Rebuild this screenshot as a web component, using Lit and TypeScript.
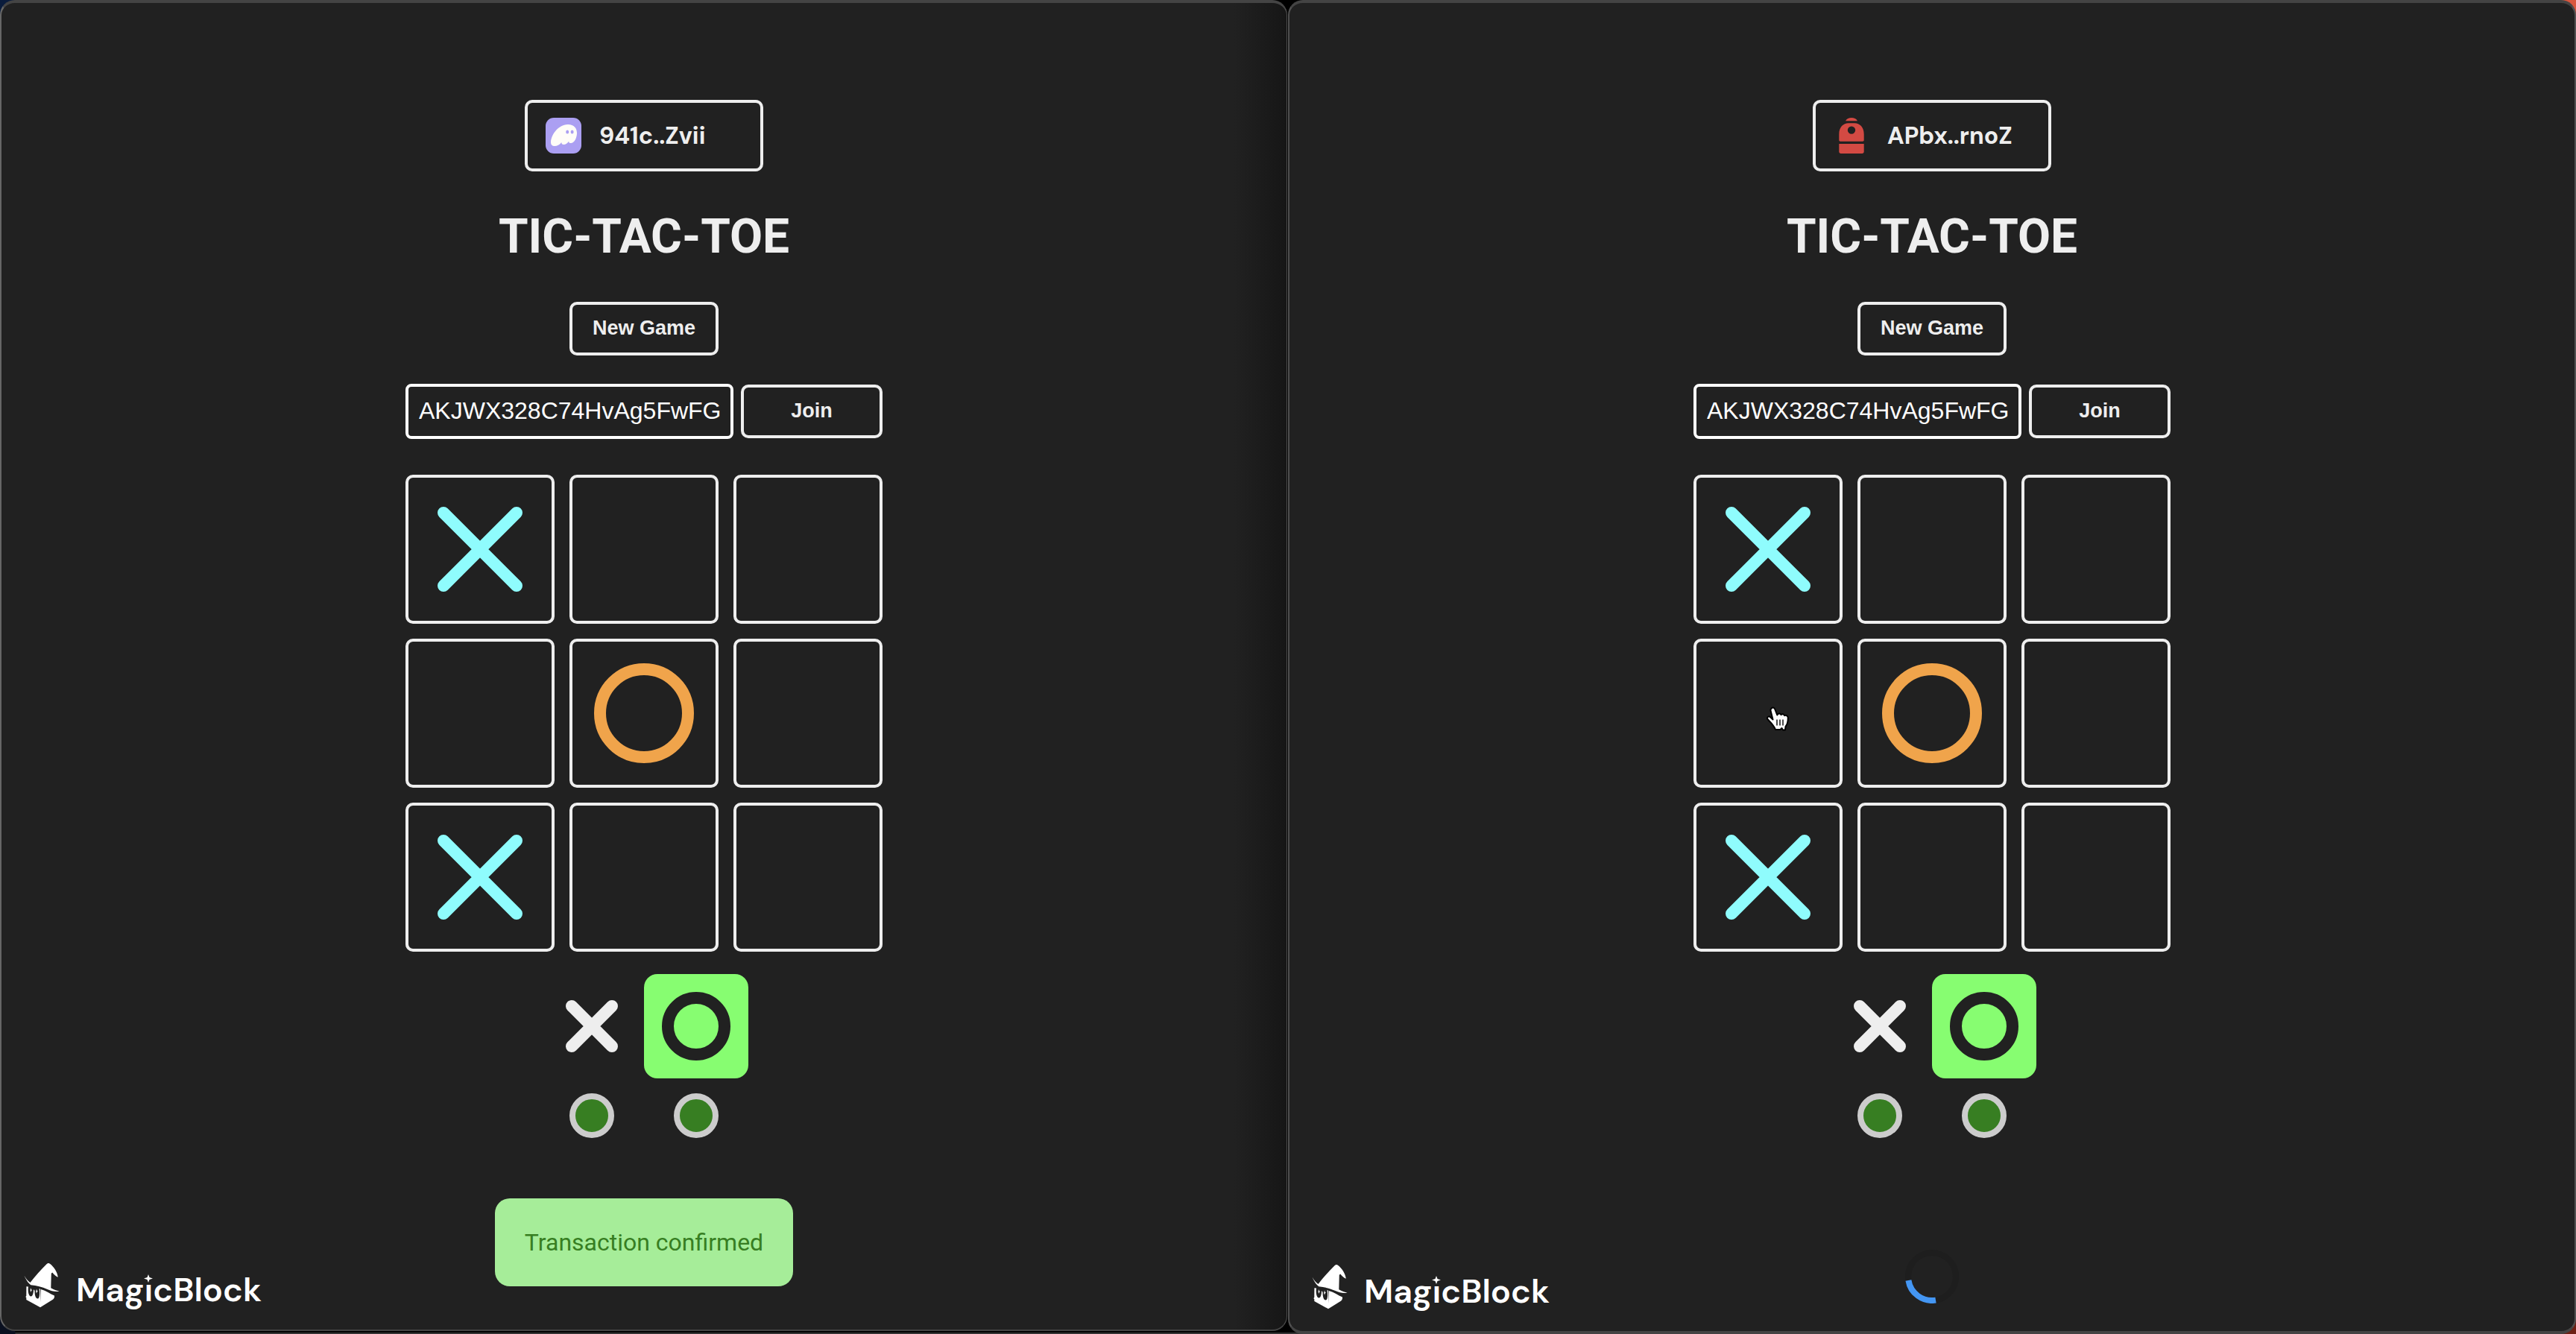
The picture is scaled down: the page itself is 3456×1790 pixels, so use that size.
import { LitElement, html, css, svg, nothing } from "lit";
import { customElement, property } from "lit/decorators.js";

type Mark = "x" | "o" | "";

const phantomIcon = html`<svg class="wallet-icon" viewBox="0 0 48 48" aria-hidden="true">
  <rect width="48" height="48" rx="11" fill="#ab9ff2" />
  <path
    d="M7 32.500C7.500 22.500 17 9.500 29.500 9C38 8.700 42 14 42 20.500C42 27 38.500 34 34 34C31.500 34 31 32.800 31.200 31.400C29.600 33.900 26.800 36 24.200 36C22.300 36 21.300 34.800 21.300 33C18.800 36.400 15.400 38 12 38C8.700 38 6.800 36 7 32.500Z"
    fill="#fffdf8"
  />
  <ellipse cx="29.200" cy="19" rx="2" ry="2.600" fill="#ab9ff2" />
  <ellipse cx="35.600" cy="19" rx="2" ry="2.600" fill="#ab9ff2" />
</svg>`;

const backpackIcon = html`<svg class="wallet-icon" viewBox="0 0 48 48" aria-hidden="true">
  <g fill="#d34a43">
    <path d="M16 4.200C17.500 1.400 20.500 0 24 0C27.500 0 30.500 1.400 32 4.200Z" />
    <path
      fill-rule="evenodd"
      d="M7.300 22C7.300 12.500 13 7.200 20 7.200H28C35 7.200 40.700 12.500 40.700 22V30C40.700 31 40 31.700 39 31.700H9C8 31.700 7.300 31 7.300 30ZM24 11.400A5.200 5.200 0 1 0 24 21.800A5.200 5.200 0 1 0 24 11.400Z"
    />
    <path d="M7.300 35H40.700V45.500C40.700 47 39.700 48 38.200 48H9.800C8.300 48 7.300 47 7.300 45.500Z" />
  </g>
</svg>`;

const wizardLogo = html`<svg class="wizard" viewBox="0 0 48 60" aria-hidden="true">
  <path
    fill="#fff"
    d="M.500 16.500C3 22.500 5.500 26 9.300 29.300C17.500 30.300 24 31.600 31.500 35C37.500 37.700 43 38.800 47.500 37.500C45 37 41 35.800 36.300 33.200L36.800 13.800L38.200 12.500C40.500 15.600 43 17.600 45.800 18.800C45 11.500 40 4.500 35 .700C33.200-.400 31.600.100 30 1.700C22.500 9 15 17.500 8.500 26C5 23.500 2.500 20.500 .500 16.500Z"
  />
  <path
    fill="#fff"
    d="M3.400 31.200L6 31.600C5.300 36 5.800 43.500 9 44.500C11.800 45.200 13 40 13 35L14.600 37C14.400 41.800 15.600 47.600 18.600 47.500C21.400 47.300 21.400 40 20.600 34.200L22 34.600L22.300 52L22.800 35C30 37 35 41 41 43.500V45.500C40.500 47.200 40 48 38.500 49L22 59.300L3.300 49V46L2.300 45.200L3.300 43.800Z"
  />
  <path fill="#fff" d="M9 33L10 35.500L11.500 36L10 36.700L9.300 39L8.600 36.500ZM17 34.600L17.800 37L19 37.600L17.800 38.300L17 40.500L16.200 38Z" />
</svg>`;

const boardX = svg`<path d="M43 43L141 141M141 43L43 141" stroke="#8ffcfd" stroke-width="16" stroke-linecap="round" fill="none"/>`;
const boardO = svg`<circle cx="96" cy="96" r="59" stroke="#f0a44b" stroke-width="16" fill="none"/>`;

@customElement("player-window")
export class PlayerWindow extends LitElement {
  @property() address = "";
  @property() wallet: "phantom" | "backpack" = "phantom";
  @property() game = "";
  @property({ attribute: false }) board: Mark[] = [];
  @property() status: "confirmed" | "pending" = "confirmed";
  @property({ type: Number }) hovered = -1;

  static styles = css`
    :host {
      display: flex;
      flex-direction: column;
      align-items: center;
      position: relative;
      box-sizing: border-box;
      padding-top: 130px;
      border: 2px solid #505050;
      border-top: 4px solid #444;
      border-bottom-width: 4px;
      border-bottom-color: #444;
      border-radius: 20px;
      background: #212121;
      color: #eee;
      font-family: Roboto, "Liberation Sans", sans-serif;
    }
    :host([shaded]) {
      border-left-color: #666;
      border-right-width: 1px;
      border-bottom-width: 2px;
      background: linear-gradient(to left, #161616, #212121 70px);
    }
    button,
    input {
      box-sizing: border-box;
      margin: 0;
      border: 4px solid #eee;
      border-radius: 10px;
      background: transparent;
      color: #eee;
      font: 700 27px/32px "Liberation Sans", Arial, sans-serif;
    }
    button {
      padding: 0 0 2px;
    }
    .wallet {
      display: flex;
      align-items: center;
      gap: 24px;
      width: 320px;
      height: 96px;
      padding: 0 24px;
      font: 700 32px/40px "DM Sans", "Noto Sans", sans-serif;
    }
    .wallet-icon {
      width: 48px;
      height: 48px;
    }
    h1 {
      margin: 48px 0;
      font-size: 64px;
      line-height: 79px;
      font-weight: 700;
    }
    .new-game {
      width: 200px;
      height: 72px;
    }
    .join-row {
      display: flex;
      align-items: center;
      gap: 10px;
      width: 640px;
      margin: 38px 0 48px;
    }
    .join-row input {
      width: 440px;
      height: 74px;
      padding: 0 14px 2px;
      border-color: #fff;
      border-radius: 8px;
      color: #fff;
      font-size: 32px;
      font-weight: 400;
    }
    .join {
      flex: 1;
      height: 72px;
    }
    .board {
      display: grid;
      grid-template-columns: repeat(3, 200px);
      gap: 20px;
    }
    .cell {
      display: grid;
      position: relative;
      width: 200px;
      height: 200px;
      padding: 0;
    }
    .mark {
      width: 192px;
      height: 192px;
    }
    .turns {
      display: grid;
      grid-template-columns: repeat(2, 140px);
      justify-items: center;
      row-gap: 20px;
      margin-top: 30px;
    }
    .turn {
      width: 140px;
      height: 140px;
      border-radius: 18px;
    }
    .turn.active {
      background: #87fd71;
    }
    .online {
      box-sizing: border-box;
      width: 60px;
      height: 60px;
      border: 8px solid #ccc;
      border-radius: 50%;
      background: #377e22;
    }
    .toast {
      margin-top: 81px;
      padding: 40px;
      border-radius: 20px;
      background: #a6ed99;
      color: #377e22;
      font-size: 32px;
      line-height: 38px;
    }
    .spinner {
      width: 72px;
      height: 72px;
      margin-top: 150px;
    }
    .brand {
      display: flex;
      align-items: flex-end;
      gap: 22px;
      position: absolute;
      left: 30px;
      bottom: 29px;
      color: #fff;
      font: 600 45px/48px "DM Sans", Inter, sans-serif;
      text-decoration: none;
    }
    .wizard {
      width: 48px;
      height: 60px;
    }
    .i {
      position: relative;
    }
    .spark {
      position: absolute;
      left: 0;
      top: 9px;
      width: 12px;
      height: 14px;
    }
    .pointer {
      position: absolute;
      left: 93px;
      top: 86px;
      width: 36px;
      height: 38px;
    }
  `;

  private renderCell(mark: Mark, index: number) {
    const art = mark === "x" ? boardX : boardO;
    return html`<button class="cell" aria-label="Cell ${index + 1} ${mark}">
      ${mark
        ? html`<svg class="mark" viewBox=${mark === "x" ? "-4 -4 192 192" : "0 0 192 192"}>${art}</svg>`
        : nothing}
      ${this.hovered === index
        ? html`<svg class="pointer" viewBox="0 0 36 38">
            <path
              d="M7.500 3.500C9 1.700 11.500 2.300 12.200 4.500L15.300 12.500C16.600 10 19.500 10 20.500 12.200C21.800 10.500 24.500 11 25.200 13.200C27 12.200 29.800 13.500 29.800 16.200C29.800 21.500 29.500 24.500 26.500 28L26 32.500H23L21.500 30L19.500 32H13C12.500 29.500 10 27 8 24C6.500 21.800 3.500 20 2 17.300C1.500 15.300 3.500 14 5.500 14.800L9.500 18.500L6.500 6.500C6.200 5.300 6.700 4.300 7.500 3.500Z"
              fill="#fff" stroke="#000" stroke-width="2" stroke-linejoin="round"
            />
            <path d="M15 18.500V26.500M19 18.500V26.500M23 18.500V26.500" stroke="#000" stroke-width="1.400" />
          </svg>`
        : nothing}
    </button>`;
  }

  render() {
    return html`
      <button class="wallet">
        ${this.wallet === "phantom" ? phantomIcon : backpackIcon}
        <span>${this.address}</span>
      </button>
      <h1>TIC-TAC-TOE</h1>
      <button class="new-game">New Game</button>
      <div class="join-row">
        <input id="game" aria-label="Game ID" .value=${this.game} />
        <button class="join">Join</button>
      </div>
      <div class="board">${this.board.map((m, i) => this.renderCell(m, i))}</div>
      <div class="turns">
        <svg class="turn" viewBox="0 0 140 140">
          <path d="M43 43L97 97M97 43L43 97" stroke="#eee" stroke-width="16" stroke-linecap="round" />
        </svg>
        <svg class="turn active" viewBox="0 0 140 140">
          <circle cx="70" cy="70" r="38" stroke="#212121" stroke-width="16" fill="none" />
        </svg>
        <span class="online"></span>
        <span class="online"></span>
      </div>
      ${this.status === "confirmed"
        ? html`<div class="toast" role="status">Transaction confirmed</div>`
        : html`<svg class="spinner" viewBox="-36 -36 72 72" role="status" aria-label="Pending">
            <circle r="32" fill="none" stroke="#1e1e1e" stroke-width="8" />
            <path d="M5 31.600A32 32 0 0 1 -31.600 5" fill="none" stroke="#4496f3" stroke-width="8" />
          </svg>`}
      <a class="brand" href="#">
        ${wizardLogo}
        <span>Mag<span class="i">i<svg class="spark" viewBox="0 0 12 14">
          <rect width="12" height="14" fill="#212121" />
          <path d="M6 0L7.500 4L12 5.500L7.500 7L6 11L4.500 7L0 5.500L4.500 4Z" fill="#fff" />
        </svg></span>cBlock</span>
      </a>
    `;
  }
}

@customElement("app-root")
export class AppRoot extends LitElement {
  static styles = css`
    :host {
      display: grid;
      grid-template-columns: 1fr 1fr;
      box-sizing: border-box;
      min-height: 100vh;
      background:
        radial-gradient(circle at 0 0, #0a1c3c 20px, transparent 21px),
        radial-gradient(circle at 0 100%, #0a1020 20px, transparent 21px),
        radial-gradient(circle at 100% 0, #d9573f 20px, transparent 21px),
        radial-gradient(circle at 100% 100%, #6e2015 20px, transparent 21px),
        linear-gradient(to top, #333 2px, #000 2px);
    }
    .left {
      margin: 0 1px 4px 0;
    }
  `;

  private board: Mark[] = ["x", "", "", "", "o", "", "x", "", ""];
  private game = "AKJWX328C74HvAg5FwFG";

  render() {
    return html`
      <player-window class="left" shaded address="941c..Zvii" wallet="phantom"
        .game=${this.game} .board=${this.board} status="confirmed"></player-window>
      <player-window address="APbx..rnoZ" wallet="backpack"
        .game=${this.game} .board=${this.board} status="pending" .hovered=${3}></player-window>
    `;
  }
}
